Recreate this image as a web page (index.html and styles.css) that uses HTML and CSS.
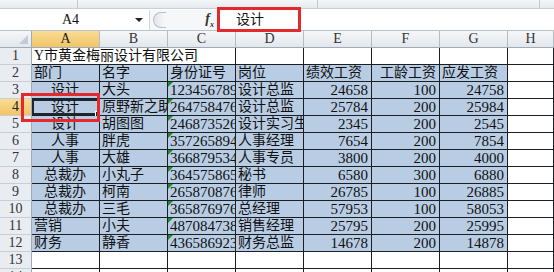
FILE: index.html
```html
<!DOCTYPE html>
<html lang="zh-CN">
<head>
   <meta charset="UTF-8">
   <title>工资表</title>
   <link rel="stylesheet" href="styles.css">
</head>
<body>
   <div class="ribbon">
      <span class="rib-sep s1"></span>
      <span class="rib-sep s2"></span>
      <span class="rib-sep s3"></span>
   </div>

   <div class="formula-bar">
      <div class="name-box">
         <span class="name-text">A4</span>
         <span class="drop"></span>
      </div>
      <div class="knob-area">
         <span class="knob"></span>
         <span class="fx">f<sub>x</sub></span>
      </div>
      <div class="formula-input">设计</div>
   </div>

   <div class="sheet">
      <div class="corner"></div>
      <div class="col-h active">A</div>
      <div class="col-h">B</div>
      <div class="col-h">C</div>
      <div class="col-h">D</div>
      <div class="col-h">E</div>
      <div class="col-h">F</div>
      <div class="col-h">G</div>
      <div class="col-h">H</div>

      <div class="row-h">1</div>
      <div class="cell span3">Y市黄金梅丽设计有限公司</div>
      <div class="cell"></div><div class="cell"></div><div class="cell"></div><div class="cell"></div><div class="cell"></div>

      <div class="row-h">2</div>
      <div class="cell fill">部门</div>
      <div class="cell fill">名字</div>
      <div class="cell fill">身份证号</div>
      <div class="cell fill">岗位</div>
      <div class="cell fill">绩效工资</div>
      <div class="cell fill right">工龄工资</div>
      <div class="cell fill">应发工资</div>
      <div class="cell"></div>

      <div class="row-h">3</div>
      <div class="cell fill center">设计</div>
      <div class="cell fill">大头</div>
      <div class="cell fill num-text">123456789012345678</div>
      <div class="cell fill">设计总监</div>
      <div class="cell fill num">24658</div>
      <div class="cell fill num">100</div>
      <div class="cell fill num">24758</div>
      <div class="cell"></div>

      <div class="row-h active">4</div>
      <div class="cell fill center selected">设计<span class="handle"></span></div>
      <div class="cell fill">原野新之助</div>
      <div class="cell fill num-text">264758476123456789</div>
      <div class="cell fill">设计总监</div>
      <div class="cell fill num">25784</div>
      <div class="cell fill num">200</div>
      <div class="cell fill num">25984</div>
      <div class="cell"></div>

      <div class="row-h">5</div>
      <div class="cell fill center">设计</div>
      <div class="cell fill">胡图图</div>
      <div class="cell fill num-text">246873526234567890</div>
      <div class="cell fill">设计实习生</div>
      <div class="cell fill num">2345</div>
      <div class="cell fill num">200</div>
      <div class="cell fill num">2545</div>
      <div class="cell"></div>

      <div class="row-h">6</div>
      <div class="cell fill center">人事</div>
      <div class="cell fill">胖虎</div>
      <div class="cell fill num-text">357265894345678901</div>
      <div class="cell fill">人事经理</div>
      <div class="cell fill num">7654</div>
      <div class="cell fill num">200</div>
      <div class="cell fill num">7854</div>
      <div class="cell"></div>

      <div class="row-h">7</div>
      <div class="cell fill center">人事</div>
      <div class="cell fill">大雄</div>
      <div class="cell fill num-text">366879534456789012</div>
      <div class="cell fill">人事专员</div>
      <div class="cell fill num">3800</div>
      <div class="cell fill num">200</div>
      <div class="cell fill num">4000</div>
      <div class="cell"></div>

      <div class="row-h">8</div>
      <div class="cell fill center">总裁办</div>
      <div class="cell fill">小丸子</div>
      <div class="cell fill num-text">364575865567890123</div>
      <div class="cell fill">秘书</div>
      <div class="cell fill num">6580</div>
      <div class="cell fill num">300</div>
      <div class="cell fill num">6880</div>
      <div class="cell"></div>

      <div class="row-h">9</div>
      <div class="cell fill center">总裁办</div>
      <div class="cell fill">柯南</div>
      <div class="cell fill num-text">265870876678901234</div>
      <div class="cell fill">律师</div>
      <div class="cell fill num">26785</div>
      <div class="cell fill num">100</div>
      <div class="cell fill num">26885</div>
      <div class="cell"></div>

      <div class="row-h">10</div>
      <div class="cell fill center">总裁办</div>
      <div class="cell fill">三毛</div>
      <div class="cell fill num-text">365876976789012345</div>
      <div class="cell fill">总经理</div>
      <div class="cell fill num">57953</div>
      <div class="cell fill num">100</div>
      <div class="cell fill num">58053</div>
      <div class="cell"></div>

      <div class="row-h">11</div>
      <div class="cell fill">营销</div>
      <div class="cell fill">小夫</div>
      <div class="cell fill num-text">487084738890123456</div>
      <div class="cell fill">销售经理</div>
      <div class="cell fill num">25795</div>
      <div class="cell fill num">200</div>
      <div class="cell fill num">25995</div>
      <div class="cell"></div>

      <div class="row-h">12</div>
      <div class="cell fill">财务</div>
      <div class="cell fill">静香</div>
      <div class="cell fill num-text">436586923901234567</div>
      <div class="cell fill">财务总监</div>
      <div class="cell fill num">14678</div>
      <div class="cell fill num">200</div>
      <div class="cell fill num">14878</div>
      <div class="cell"></div>

      <div class="row-h">13</div>
      <div class="cell"></div><div class="cell"></div><div class="cell"></div><div class="cell"></div>
      <div class="cell"></div><div class="cell"></div><div class="cell"></div><div class="cell"></div>

      <div class="row-h">14</div>
      <div class="cell"></div><div class="cell"></div><div class="cell"></div><div class="cell"></div>
      <div class="cell"></div><div class="cell"></div><div class="cell"></div><div class="cell"></div>
   </div>

   <div class="mark mark-formula"></div>
   <div class="mark mark-cell"></div>
</body>
</html>
```

FILE: styles.css
```css
body {
   margin: 0;
   width: 554px;
   height: 272px;
   overflow: hidden;
   background-color: white;
   font-family: 'Liberation Serif', 'Noto Sans CJK SC', serif;
   color: #111;
   position: relative;
}

/* ribbon bottom strip */
.ribbon {
   height: 8px;
   background: linear-gradient(#f4f6f8, #e6eaee);
   border-bottom: 1px solid #c9cfd6;
   position: relative;
}

.rib-sep {
   position: absolute;
   top: 0;
   width: 1px;
   height: 8px;
   background-color: #c3c9d1;
}

.s1 { left: 77px; }
.s2 { left: 317px; }
.s3 { left: 539px; }

/* formula bar */
.formula-bar {
   display: flex;
   height: 20px;
   border-bottom: 1px solid #b9c1cb;
   background-color: #f6f7f9;
   border-top: 1px solid #fff;
}

.name-box {
   width: 149px;
   display: flex;
   align-items: center;
   background-color: white;
   border-right: 1px solid #d3d8de;
}

.name-text {
   flex: 1;
   text-align: center;
   font-size: 14px;
   padding-left: 6px;
}

.drop {
   width: 0;
   height: 0;
   border-left: 4px solid transparent;
   border-right: 4px solid transparent;
   border-top: 4px solid #222;
   margin-right: 6px;
}

.knob-area {
   width: 66px;
   display: flex;
   align-items: center;
   justify-content: space-between;
   padding-right: 1px;
}

.knob {
   width: 12px;
   height: 14px;
   margin-left: 3px;
   border-radius: 8px 0 0 8px;
   border: 1px solid #b8bec6;
   border-right: none;
   background: linear-gradient(90deg, #e2e5e9, #f7f8f9);
}

.fx {
   font-family: 'Liberation Serif', serif;
   font-style: italic;
   font-weight: bold;
   font-size: 14px;
   color: #333;
   margin-right: 2px;
}

.fx sub {
   font-size: 8px;
}

.formula-input {
   flex: 1;
   background-color: white;
   border-left: 1px solid #c3c9d1;
   font-size: 14px;
   line-height: 20px;
   padding-left: 18px;
}

/* sheet grid */
.sheet {
   display: grid;
   grid-template-columns: 32px repeat(7, 68px) 1fr;
   grid-auto-rows: 17px;
}

.corner,
.col-h,
.row-h {
   background: linear-gradient(#f5f7f9, #e3e7ec);
   color: #333;
   font-size: 14px;
   line-height: 16px;
   text-align: center;
   box-sizing: border-box;
}

.corner {
   position: relative;
   border-right: 1px solid #9eabb9;
   border-bottom: 1px solid #9eabb9;
}

.corner::after {
   content: '';
   position: absolute;
   right: 3px;
   bottom: 3px;
   border-left: 9px solid transparent;
   border-bottom: 9px solid #c4cad1;
}

.col-h {
   border-right: 1px solid #b3bcc7;
   border-bottom: 1px solid #9eabb9;
}

.row-h {
   background: #e9ecf0;
   border-right: 1px solid #9eabb9;
   border-bottom: 1px solid #c8ced6;
}

.col-h.active,
.row-h.active {
   background: linear-gradient(#f9dc94, #f2c566);
   color: #222;
}

.cell {
   box-sizing: border-box;
   border-right: 1px solid #1b1f24;
   border-bottom: 1px solid #1b1f24;
   font-size: 14px;
   line-height: 16px;
   padding: 0 3px 0 2px;
   white-space: nowrap;
   overflow: hidden;
   position: relative;
}

.span3 {
   grid-column: span 3;
}

.fill {
   background-color: #b8cce4;
}

.center {
   text-align: center;
}

.right {
   text-align: right;
}

.num {
   text-align: right;
   font-size: 15px;
}

.num-text {
   font-size: 15px;
   text-overflow: clip;
}

.num-text::before {
   content: '';
   position: absolute;
   left: 0;
   top: 0;
   border-top: 5px solid #1f8a2e;
   border-right: 5px solid transparent;
}

.selected {
   overflow: visible;
   box-shadow: inset 0 0 0 2px #1d2733;
}

.handle {
   position: absolute;
   right: -3px;
   bottom: -3px;
   width: 5px;
   height: 5px;
   background-color: #1d2733;
   border: 1px solid white;
}

/* red annotation boxes */
.mark {
   position: absolute;
   border: 3px solid #e5282c;
   box-sizing: border-box;
}

.mark-formula {
   left: 217px;
   top: 7px;
   width: 84px;
   height: 25px;
}

.mark-cell {
   left: 21px;
   top: 93px;
   width: 79px;
   height: 29px;
}
```
